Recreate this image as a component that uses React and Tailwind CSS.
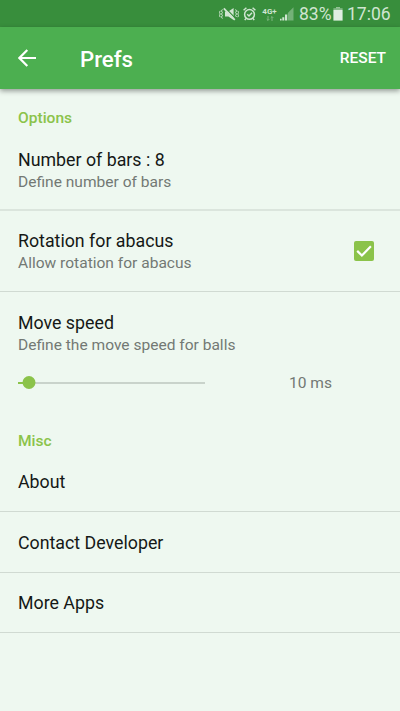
import { useState } from "react";

const MISC_ITEMS = ["About", "Contact Developer", "More Apps"];

function MuteIcon() {
  return (
    <svg width="20" height="14" viewBox="0 0 20 14" fill="none" stroke="currentColor">
      <path d="M6 4.5h3.4L14.6 1v12L9.4 9.5H6z" fill="currentColor" stroke="none" />
      <path d="M5.8 0.4 17 12" stroke="#388e3c" strokeWidth="1.2" />
      <path d="M4.8 1.4 15.8 12.8" strokeWidth="1.7" />
      <path
        d="M3.4 2.4 2.5 4l.9 1.5L2.5 7l.9 1.5-.9 1.5.9 1.6M1.2 3.8.5 5.4l.7 1.6-.7 1.6.7 1.6M16.6 2.4l.9 1.6-.9 1.5.9 1.5-.9 1.5.9 1.5M18.8 3.8l.7 1.6-.7 1.6.7 1.6-.7 1.6"
        strokeWidth="1"
      />
    </svg>
  );
}

function AlarmIcon() {
  return (
    <svg width="13" height="14" viewBox="0 0 13 14" fill="none" stroke="currentColor" strokeWidth="1.5">
      <circle cx="6.5" cy="7.4" r="4.9" />
      <path d="M4.2 7.2 6 9l3-3.2M.6 3.2 3.4.8M12.4 3.2 9.6.8M3 11.4l-1.2 1.7M10 11.4l1.2 1.7" />
    </svg>
  );
}

function NetworkIcon() {
  return (
    <div className="flex w-[15px] flex-col items-center">
      <span className="text-[8px] leading-[8px] font-bold">4G+</span>
      <svg width="8" height="5" viewBox="0 0 8 5" className="opacity-50" fill="none" stroke="currentColor" strokeWidth="0.9">
        <path d="M2 0v4.4M.7 3.1 2 4.4l1.3-1.3M6 5V.6M4.7 1.9 6 .6l1.3 1.3" />
      </svg>
    </div>
  );
}

function SignalIcon() {
  return (
    <svg width="14" height="14" viewBox="0 0 14 14" fill="currentColor">
      <path d="M13.5.3v13.2H7.8V6z" opacity="0.4" />
      <path d="M0 11.8h1.6v1.7H0zM2.3 10.2h2v3.3h-2zM5 7.5h2.2v6H5z" />
    </svg>
  );
}

function StatusBar() {
  return (
    <div className="flex h-[27px] items-center bg-[#388e3c] pt-px pl-[219px] text-[#d0e5d1]">
      <MuteIcon />
      <div className="ml-[4px]"><AlarmIcon /></div>
      <div className="ml-[6px]"><NetworkIcon /></div>
      <div className="ml-[3px]"><SignalIcon /></div>
      <span className="ml-[5px] w-[32px] pt-px text-[17.5px] whitespace-nowrap">83%</span>
      <svg width="10" height="14" viewBox="0 0 10 14" className="ml-[2px] shrink-0" fill="currentColor">
        <path d="M3 0h4v1.3H3z" opacity="0.6" />
        <path d="M.4 1.2h9.2v1.8H.4z" opacity="0.5" />
        <path d="M.4 3h9.2v10.6H.4z" fill="#e0eee1" />
      </svg>
      <span className="ml-[4px] pt-px text-[17.5px]">17:06</span>
    </div>
  );
}

function Toolbar({ onReset }) {
  return (
    <header className="relative flex h-[62px] items-center bg-[#4caf50] pr-[14px] pl-[18px] text-white shadow-[0_2px_5px_rgba(0,0,0,0.38)]">
      <button aria-label="Back" className="h-[18px] w-[18px]">
        <svg width="18" height="18" viewBox="0 0 18 18" fill="none" stroke="currentColor" strokeWidth="2.2">
          <path d="M18 9H1.8M9.3 1 1.4 9l7.9 8" />
        </svg>
      </button>
      <h1 className="ml-[44px] pt-[2px] text-[22.2px] leading-[28px] font-medium">Prefs</h1>
      <button onClick={onReset} className="ml-auto pt-[2px] text-[15.5px] font-medium">RESET</button>
    </header>
  );
}

function Title({ children }) {
  return <div className="text-[17.8px] leading-[23px] text-[#151816]">{children}</div>;
}

function Summary({ children }) {
  return <div className="text-[15.55px] leading-[22px] text-[#737974]">{children}</div>;
}

export default function App() {
  const [rotation, setRotation] = useState(true);
  const [speed, setSpeed] = useState(10);

  const reset = () => {
    setRotation(true);
    setSpeed(10);
  };

  return (
    <div className="h-[711px] w-[400px] overflow-hidden bg-[#eef8f0] font-['Roboto',sans-serif]">
      <StatusBar />
      <Toolbar onReset={reset} />

      <h2 className="h-[59px] px-[18px] pt-[18px] text-[15.55px] leading-[22px] font-medium text-[#8bc34a]">Options</h2>
      <div className="h-[63px] border-b-2 border-[#dbe5dd] px-[18px]">
        <Title>Number of bars : 8</Title>
        <Summary>Define number of bars</Summary>
      </div>

      <div className="flex h-[81px] items-center justify-between border-b border-[#d0dad2] pr-[26px] pl-[18px]">
        <div className="pt-px">
          <Title>Rotation for abacus</Title>
          <Summary>Allow rotation for abacus</Summary>
        </div>
        <button
          role="checkbox"
          aria-checked={rotation}
          aria-label="Rotation for abacus"
          onClick={() => setRotation(!rotation)}
          className="h-[20px] w-[20px] rounded-[2px] bg-[#8bc34a]"
        >
          {rotation && (
            <svg width="20" height="20" viewBox="0 0 20 20" fill="none" stroke="white" strokeWidth="2.2">
              <path d="m3.2 9.9 4.7 4.6 9-9.2" />
            </svg>
          )}
        </button>
      </div>

      <div className="h-[138px] px-[18px] pt-[19px]">
        <Title>Move speed</Title>
        <Summary>Define the move speed for balls</Summary>
        <div className="mt-[15px] flex h-[23px] items-center">
          <div className="relative flex h-[14px] w-[187px] items-center">
            <div className="h-[2px] w-full bg-[#c9d3cb]">
              <div className="h-full bg-[#8bc34a]" style={{ width: `${speed * 0.6}%` }} />
            </div>
            <div
              className="absolute h-[13px] w-[13px] -translate-x-1/2 rounded-full bg-[#8bc34a]"
              style={{ left: `${speed * 0.6}%` }}
            />
          </div>
          <span className="ml-[84px] pt-[2px] text-[15.55px] text-[#737974]">{speed} ms</span>
        </div>
      </div>

      <h2 className="h-[22px] px-[18px] text-[15.55px] leading-[22px] font-medium text-[#8bc34a]">Misc</h2>
      {MISC_ITEMS.map((item) => (
        <div key={item} className="flex h-[60.4px] items-center border-b border-[#d0dad2] px-[18px]">
          <Title>{item}</Title>
        </div>
      ))}
    </div>
  );
}
